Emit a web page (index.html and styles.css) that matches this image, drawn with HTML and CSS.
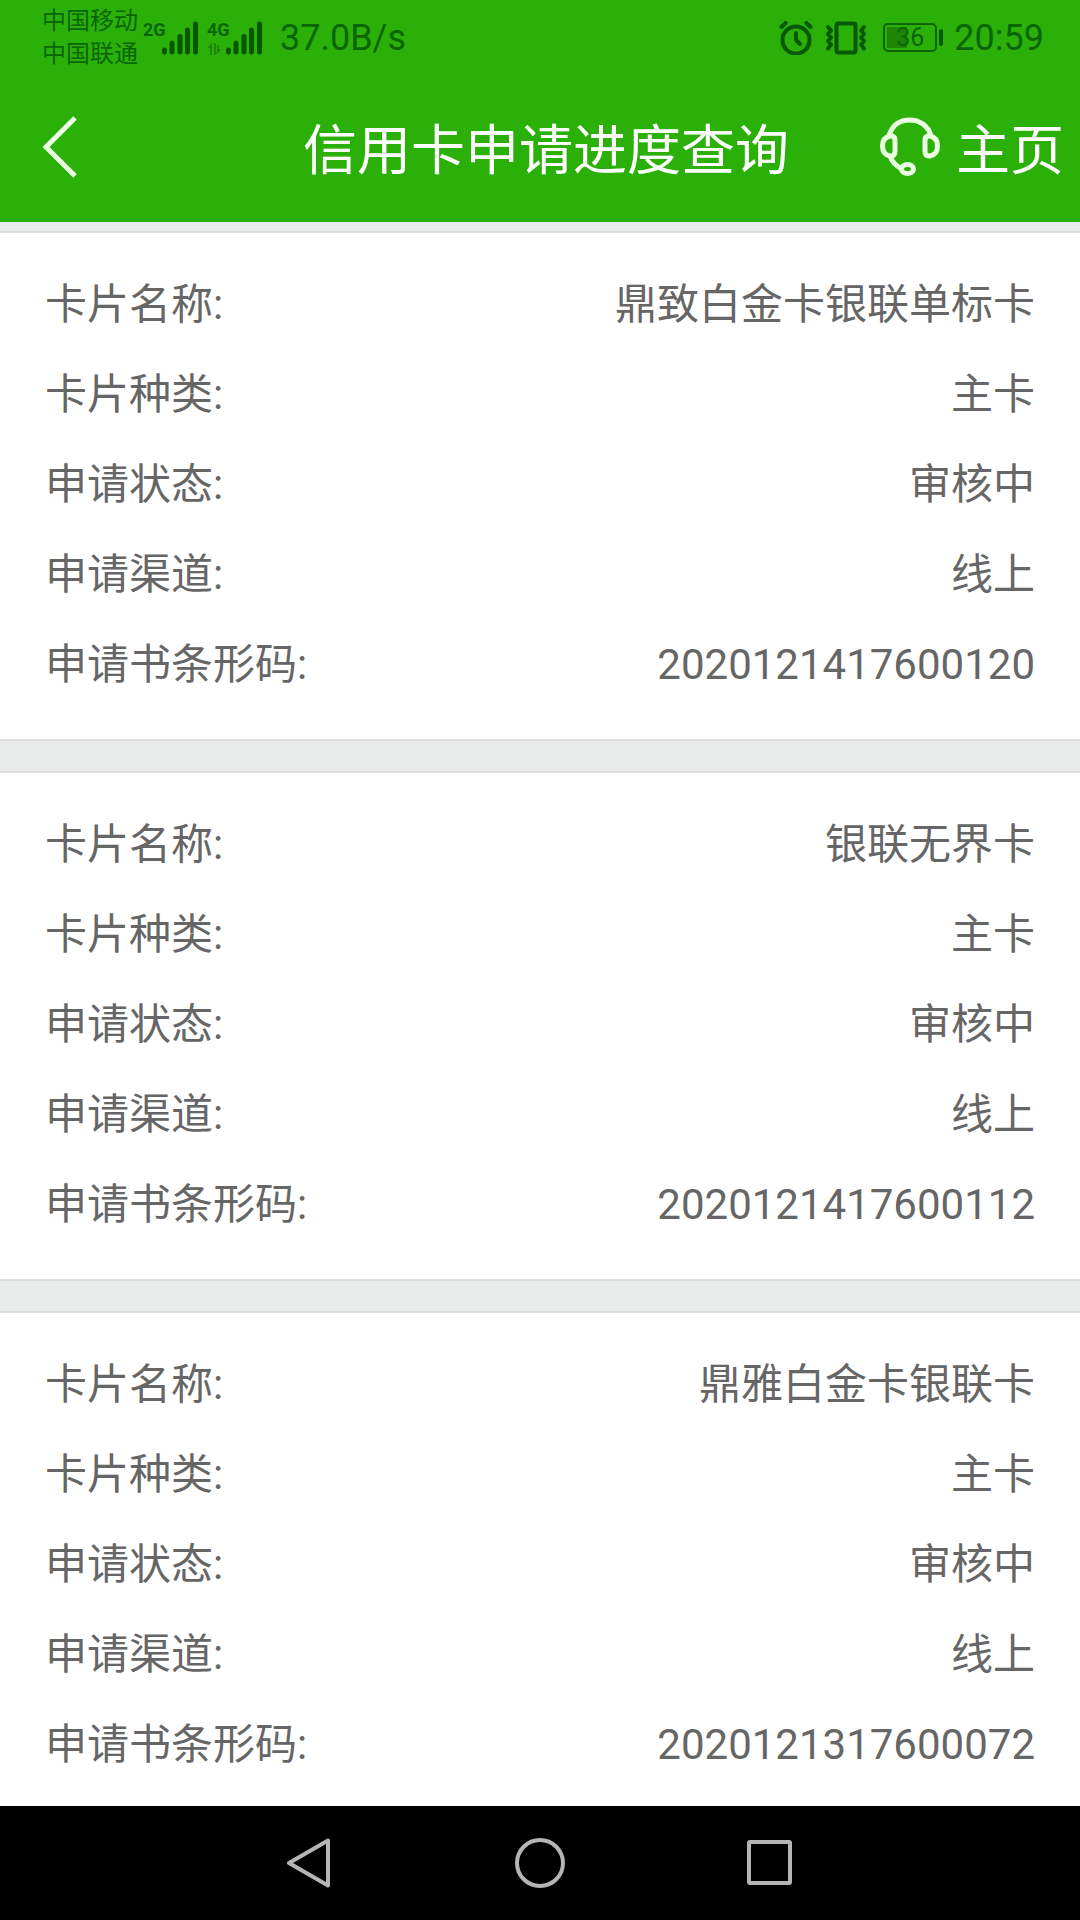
FILE: index.html
```
<!DOCTYPE html>
<html lang="zh-CN">
<head>
    <meta charset="UTF-8">
    <meta name="viewport" content="width=device-width, initial-scale=1.0">
    <title>信用卡申请进度查询</title>
    <link rel="stylesheet" href="styles.css">
</head>
<body>
    <!-- 状态栏 -->
    <div class="status-bar">
        <div class="carriers">
            <span>中国移动</span>
            <span>中国联通</span>
        </div>
        <div class="signal">
            <div class="signal-type">
                <span>2G</span>
            </div>
            <svg class="bars" width="36" height="34" viewBox="0 0 36 34">
                <path d="M2.5 29v2M10 22v9M18 15.500v15.500M25.500 9v22M33.500 3v28"/>
            </svg>
        </div>
        <div class="signal">
            <div class="signal-type">
                <span>4G</span>
                <svg width="15" height="12" viewBox="0 0 15 12">
                    <path class="arrows" d="M0 5L5 0v12H3V5zM7 0h2v12H7zM9 12l6-6h-3V2h-2v6z"/>
                </svg>
            </div>
            <svg class="bars" width="36" height="34" viewBox="0 0 36 34">
                <path d="M2.500 29v2M10 22v9M18 15.500v15.500M25.500 9v22M33.500 3v28"/>
            </svg>
        </div>
        <span class="speed">37.0B/s</span>
        <div class="status-right">
            <svg class="line-icon" width="34" height="34" viewBox="0 0 34 34">
                <circle cx="17" cy="19" r="13.500"/>
                <path d="M17 12v7l4 4M2.500 6l4-4M31.500 6l-4-4"/>
            </svg>
            <svg class="line-icon" width="44" height="34" viewBox="0 0 44 34">
                <rect x="12.500" y="2.500" width="19" height="29" rx="2"/>
                <path d="M4 6l3 3.500-3 3.500 3 3.500-3 3.500 3 3.500-3 4M40 6l-3 3.500 3 3.500-3 3.500 3 3.500-3 3.500 3 4"/>
            </svg>
            <div class="battery">
                <span class="battery-body">36</span>
                <span class="battery-tip"></span>
            </div>
            <span class="time">20:59</span>
        </div>
    </div>

    <!-- 标题栏 -->
    <header class="header">
        <button class="back" type="button" aria-label="返回">
            <svg width="38" height="64" viewBox="0 0 38 64">
                <path d="M35 3L6 32l29 29"/>
            </svg>
        </button>
        <h1>信用卡申请进度查询</h1>
        <div class="header-links">
            <a href="#service" aria-label="客服">
                <svg width="60" height="60" viewBox="0 0 60 60">
                    <path d="M9 19C12 8 20 3 29.500 3S48 8 51 19"/>
                    <path d="M10 19h1q4 0 4 4v11q0 5-4 5h-1C5 38 2.500 34 2.500 29S5 20 10 19z"/>
                    <path d="M50 19h-1q-4 0-4 4v11q0 5 4 5h1c5-1 7.500-5 7.500-10S55 20 50 19z"/>
                    <path d="M10 39c2 6 6 10 12 13"/>
                    <ellipse cx="27.500" cy="52" rx="6" ry="4.500"/>
                </svg>
            </a>
            <a href="#home">主页</a>
        </div>
    </header>

    <!-- 申请记录 -->
    <main class="list">
        <dl class="card">
            <div class="row"><dt>卡片名称:</dt><dd>鼎致白金卡银联单标卡</dd></div>
            <div class="row"><dt>卡片种类:</dt><dd>主卡</dd></div>
            <div class="row"><dt>申请状态:</dt><dd>审核中</dd></div>
            <div class="row"><dt>申请渠道:</dt><dd>线上</dd></div>
            <div class="row"><dt>申请书条形码:</dt><dd>2020121417600120</dd></div>
        </dl>
        <dl class="card">
            <div class="row"><dt>卡片名称:</dt><dd>银联无界卡</dd></div>
            <div class="row"><dt>卡片种类:</dt><dd>主卡</dd></div>
            <div class="row"><dt>申请状态:</dt><dd>审核中</dd></div>
            <div class="row"><dt>申请渠道:</dt><dd>线上</dd></div>
            <div class="row"><dt>申请书条形码:</dt><dd>2020121417600112</dd></div>
        </dl>
        <dl class="card">
            <div class="row"><dt>卡片名称:</dt><dd>鼎雅白金卡银联卡</dd></div>
            <div class="row"><dt>卡片种类:</dt><dd>主卡</dd></div>
            <div class="row"><dt>申请状态:</dt><dd>审核中</dd></div>
            <div class="row"><dt>申请渠道:</dt><dd>线上</dd></div>
            <div class="row"><dt>申请书条形码:</dt><dd>2020121317600072</dd></div>
        </dl>
    </main>

    <!-- 系统导航键 -->
    <nav class="nav-bar">
        <button type="button" aria-label="后退">
            <svg width="50" height="50" viewBox="0 0 50 50"><path d="M43 2.500v45L4 25z"/></svg>
        </button>
        <button type="button" aria-label="主屏幕">
            <svg width="50" height="50" viewBox="0 0 50 50"><circle cx="25" cy="25" r="23"/></svg>
        </button>
        <button type="button" aria-label="最近任务">
            <svg width="50" height="50" viewBox="0 0 50 50"><rect x="4" y="4" width="41" height="41" rx="1"/></svg>
        </button>
    </nav>
</body>
</html>
```
FILE: styles.css
```
* {
    box-sizing: border-box;
}
body {
    display: flex;
    flex-direction: column;
    height: 100vh;
    margin: 0;
    font-family: Roboto, "Noto Sans CJK SC", sans-serif;
    background-color: #e8ebea;
    color: #666666;
}
svg {
    display: block;
    fill: none;
}
button {
    padding: 0;
    border: none;
    background: none;
    cursor: pointer;
}
a {
    color: inherit;
    text-decoration: none;
}

/* 状态栏 */
.status-bar {
    display: flex;
    align-items: center;
    flex-shrink: 0;
    height: 75px;
    padding: 0 36px 0 42px;
    background-color: #2ab009;
    color: #0a6604;
    font-size: 36px;
}
.carriers {
    display: flex;
    flex-direction: column;
    font-size: 24px;
    line-height: 33px;
}
.signal {
    display: flex;
    width: 55px;
    margin-left: 9px;
}
.carriers + .signal {
    margin-left: 5px;
}
.signal-type {
    display: flex;
    flex-direction: column;
    justify-content: space-between;
    width: 19px;
    height: 34px;
    font-size: 18px;
    line-height: 18px;
    font-weight: bold;
}
.bars {
    stroke: #075802;
    stroke-width: 5;
    stroke-linecap: round;
}
.arrows {
    fill: #1c8a06;
}
.speed {
    margin-left: 18px;
}
.status-right {
    display: flex;
    align-items: center;
    gap: 11px;
    margin-left: auto;
}
.line-icon {
    stroke: #075802;
    stroke-width: 4;
    stroke-linecap: round;
    stroke-linejoin: round;
}
.battery {
    display: flex;
    align-items: center;
    gap: 2px;
    margin-left: 4px;
}
.battery-body {
    width: 54px;
    height: 29px;
    border: 2px solid #0a6604;
    border-radius: 5px;
    background: linear-gradient(#1f8507, #1f8507) 2px center / 20px 21px no-repeat;
    font-size: 25px;
    line-height: 26px;
    text-align: center;
}
.battery-tip {
    width: 4px;
    height: 17px;
    border-radius: 2px;
    background-color: #075802;
}

/* 标题栏 */
.header {
    display: grid;
    grid-template-columns: 1fr auto 1fr;
    align-items: center;
    flex-shrink: 0;
    height: 147px;
    padding: 0 16px 4px 28px;
    background-color: #2ab009;
    color: #ffffff;
    font-size: 54px;
}
.header h1 {
    margin: 0;
    font-size: 54px;
    font-weight: normal;
}
.header svg {
    stroke: #e9ffe0;
    stroke-width: 5;
}
.back {
    justify-self: start;
    padding-left: 12px;
}
.header-links {
    display: flex;
    align-items: center;
    justify-self: end;
    gap: 16px;
}

/* 申请记录 */
.list {
    flex: 1;
    min-height: 0;
    padding-top: 9px;
    overflow: hidden;
}
.card {
    margin: 0 0 30px;
    padding: 27px 45px 29px;
    border: solid #dcdfde;
    border-width: 2px 0;
    background-color: #ffffff;
}
.row {
    display: flex;
    justify-content: space-between;
    font-size: 42px;
    line-height: 90px;
}
.row dd {
    margin: 0;
}

/* 系统导航键 */
.nav-bar {
    display: flex;
    align-items: center;
    justify-content: center;
    flex-shrink: 0;
    gap: 180px;
    height: 114px;
    background-color: #000000;
}
.nav-bar svg {
    stroke: #b5b5b5;
    stroke-width: 4;
    stroke-linejoin: round;
}
```
